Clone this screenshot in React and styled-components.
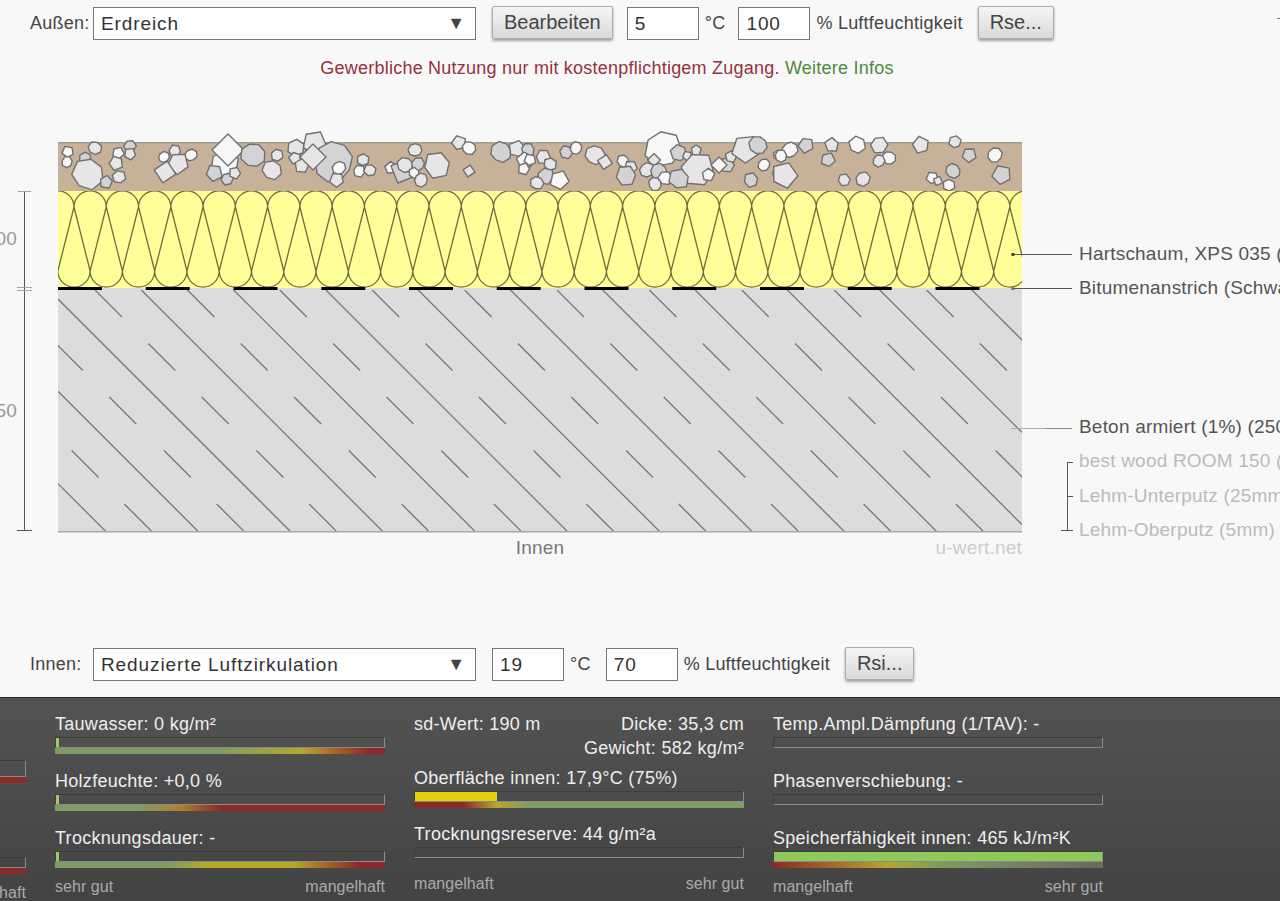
import React from 'react';
import styled, { createGlobalStyle } from 'styled-components';

const GlobalStyle = createGlobalStyle`
  html, body {
    margin: 0;
    height: 901px;
    overflow: hidden;
    background: #f8f8f8;
    font-family: "Liberation Sans", Arial, sans-serif;
  }
`;

// x, y, radius, shade (w white, l light, g grey), sides
const STONES = [
  [68, 152, 5, 'w', 5], [67, 162, 4.5, 'w', 7], [95, 148, 5.5, 'l', 7], [85, 158, 5, 'g', 6],
  [88, 174, 13, 'l', 7], [118, 153, 5, 'w', 5], [116, 163, 6, 'l', 5], [130, 146, 5, 'g', 6],
  [130, 154, 5, 'l', 5], [119, 177, 5.5, 'l', 6], [106, 182, 5.5, 'g', 5],
  [164, 157, 4.5, 'w', 8], [175, 151, 5, 'l', 6], [191, 155, 5, 'w', 8], [178, 163, 9, 'l', 5],
  [165, 172, 11, 'l', 4], [225, 165, 12, 'w', 6], [214, 173, 7, 'g', 5], [227, 179, 5, 'g', 6],
  [235, 173, 5, 'l', 5], [228, 150, 16, 'w', 4], [253, 155, 10, 'g', 8], [277, 155, 5, 'l', 6], [272, 170, 8, 'l', 7],
  [296, 148, 7, 'l', 6], [314, 143, 10, 'l', 5], [295, 158, 5, 'l', 5], [302, 166, 6, 'l', 5],
  [333, 162, 16, 'g', 9], [313, 157, 13, 'l', 4], [339, 168, 5.5, 'w', 8], [337, 180, 6, 'l', 5],
  [363, 160, 5, 'l', 6], [359, 171, 5, 'w', 6], [370, 170, 5, 'l', 6],
  [391, 168, 5, 'w', 5], [415, 150, 5.5, 'l', 8], [403, 171, 13, 'g', 4], [405, 165, 6.5, 'l', 7],
  [418, 164, 5.5, 'g', 7], [414, 173, 4.5, 'w', 6], [421, 180, 5.5, 'l', 8], [437, 165, 11, 'l', 6],
  [459, 143, 6, 'l', 5], [469, 148, 5.5, 'w', 8], [469, 171, 6, 'l', 4],
  [501, 152, 8.5, 'g', 8], [517, 149, 7, 'l', 5], [528, 150, 5.5, 'g', 7], [525, 160, 7, 'w', 5], [524, 169, 5, 'w', 5],
  [530, 160, 5, 'w', 5], [543, 157, 6, 'l', 6], [550, 164, 5.5, 'l', 6], [546, 176, 7, 'g', 6],
  [537, 183, 5.5, 'l', 7], [559, 180, 8, 'w', 5], [566, 152, 5.5, 'g', 6], [576, 148, 5, 'w', 8],
  [595, 155, 8, 'l', 8], [605, 162, 7.5, 'l', 4], [623, 161, 5, 'w', 7], [631, 167, 5.5, 'l', 5], [626, 176, 8.5, 'g', 6],
  [663, 149, 15, 'w', 7], [654, 160, 6.5, 'l', 4], [647, 170, 6, 'l', 8], [659, 172, 7, 'g', 8],
  [665, 178, 6, 'w', 6], [655, 184, 5.5, 'l', 8], [679, 153, 7, 'g', 6], [687, 156, 4, 'l', 5], [696, 150, 4.5, 'l', 5],
  [698, 169, 14, 'l', 6], [679, 179, 8.5, 'g', 6], [708, 175, 5.5, 'w', 5], [727, 165, 6, 'g', 6],
  [719, 165, 8, 'w', 4], [731, 157, 5, 'l', 5], [745, 149, 12, 'l', 5], [758, 145, 7.5, 'g', 8],
  [764, 165, 5, 'w', 8], [751, 180, 6, 'g', 6], [778, 155, 4, 'l', 6], [778, 173, 5, 'l', 6],
  [790, 150, 6.5, 'w', 8], [781, 156, 5, 'w', 7], [784, 175, 11, 'l', 5], [806, 145, 6.5, 'g', 5],
  [832, 145, 6, 'l', 5], [828, 160, 6, 'g', 5], [857, 145, 7, 'w', 6], [879, 145, 7, 'l', 6],
  [889, 158, 5.5, 'w', 8], [879, 161, 5, 'l', 7], [844, 180, 5, 'l', 6], [863, 179, 6, 'l', 7],
  [921, 145, 7, 'l', 5], [955, 142, 5, 'l', 6], [969, 155, 6, 'g', 5], [995, 155, 6, 'w', 8],
  [953, 171, 6, 'g', 8], [932, 178, 5, 'w', 5], [938, 181, 5, 'l', 4], [949, 185, 5, 'w', 6], [1002, 175, 8, 'g', 5],
];

const SHADES = { w: '#f7f7f7', l: '#e6e6e8', g: '#d3d3d5' };

const stonePoints = (x, y, r, sides, seed) => {
  const points = [];
  const start = sides === 4 ? 0.2 * (seed % 3) : seed * 1.7;
  for (let i = 0; i < sides; i++) {
    const a = start + (i / sides) * Math.PI * 2;
    const k = sides === 4 ? 1 : 1.08 + 0.2 * Math.abs(Math.sin(seed * 3.1 + i * 2.3));
    points.push(`${(x + Math.cos(a) * r * k).toFixed(1)},${(y + Math.sin(a) * r * k).toFixed(1)}`);
  }
  return points.join(' ');
};

const LEFT = 58;
const RIGHT = 1022;
const WAVE = 32.27;

const buildWave = () => {
  let d = '';
  for (let i = -1; i < 30; i++) {
    const t = 74 + WAVE * i;
    const b = t + WAVE / 2;
    d += `M${t} 207A${WAVE / 2} ${WAVE / 2} 0 0 1 ${t + WAVE} 207`;
    d += `M${b} 271A${WAVE / 2} ${WAVE / 2} 0 0 0 ${b + WAVE} 271`;
    d += `M${t} 207L${b} 271M${t + WAVE} 207L${b} 271`;
  }
  return d;
};

const buildHatch = () => {
  const lines = [];
  for (let k = 0; k < 13; k++) {
    const c = 425.6 - 92.3 * k;
    lines.push([LEFT, LEFT + c, RIGHT, RIGHT + c]);
  }
  const len = 27;
  const rows = [[290, 95], [343.5, 148.3], [397, 201.7], [450.5, 164], [504, 216.7]];
  rows.forEach(([y, start]) => {
    for (let k = -1; k < 10; k++) {
      const x = start + 92.4 * k;
      lines.push([x, y, x + len, y + len]);
    }
  });
  return lines;
};

const Wall = () => (
  <Drawing viewBox="0 90 1280 558">
    <defs>
      <clipPath id="wave-clip"><rect x={LEFT} y="191" width={RIGHT - LEFT} height="97" /></clipPath>
      <clipPath id="hatch-clip"><rect x={LEFT} y="290" width={RIGHT - LEFT} height="241" /></clipPath>
    </defs>

    <rect x={LEFT} y="142" width={RIGHT - LEFT} height="49" fill="#c7b299" />
    <rect x={LEFT} y="142" width={RIGHT - LEFT} height="1.5" fill="#a59c90" />
    {STONES.map(([x, y, r, shade, sides], i) => (
      <polygon
        key={i}
        points={stonePoints(x, y, r, sides, i + 1)}
        fill={SHADES[shade]}
        stroke="#707070"
        strokeWidth="1.4"
        strokeLinejoin="round"
      />
    ))}

    <rect x={LEFT} y="191" width={RIGHT - LEFT} height="97" fill="#ffff99" />
    <path d={buildWave()} fill="none" stroke="#6f6d3c" strokeWidth="1.3" clipPath="url(#wave-clip)" />

    <rect x={LEFT} y="288" width={RIGHT - LEFT} height="244" fill="#dcdcdc" />
    <g clipPath="url(#hatch-clip)" stroke="#777" strokeWidth="1.3">
      {buildHatch().map(([x1, y1, x2, y2], i) => (
        <line key={i} x1={x1} y1={y1} x2={x2} y2={y2} />
      ))}
    </g>
    <rect x={LEFT} y="531" width={RIGHT - LEFT} height="1.5" fill="#a9a9a9" />
    {Array.from({ length: 11 }, (_, i) => (
      <rect key={i} x={LEFT + 87.75 * i} y="287" width="44" height="3" fill="#000" />
    ))}

    <g stroke="#555" strokeWidth="1">
      <line x1="24.5" y1="191" x2="24.5" y2="531" />
      <line x1="17" y1="530.5" x2="32" y2="530.5" />
      <line x1="1013" y1="254.5" x2="1072" y2="254.5" />
      <line x1="1013" y1="288.5" x2="1072" y2="288.5" />
      <line x1="1045" y1="428.5" x2="1072" y2="428.5" stroke="#888" />
      <line x1="1011" y1="428.5" x2="1045" y2="428.5" stroke="#aaa" />
      <line x1="1067.5" y1="462" x2="1067.5" y2="531" />
      <line x1="1067" y1="462.5" x2="1073" y2="462.5" />
      <line x1="1067" y1="496.5" x2="1073" y2="496.5" />
      <line x1="1061" y1="530.5" x2="1073" y2="530.5" />
    </g>
    <g stroke="#a5a5a5" strokeWidth="1">
      <line x1="18" y1="191.5" x2="31" y2="191.5" />
      <line x1="17" y1="287.5" x2="32" y2="287.5" />
      <line x1="17" y1="290.5" x2="32" y2="290.5" />
    </g>
    <circle cx="1013" cy="254.5" r="1.8" fill="#444" />
    <circle cx="1013" cy="288.5" r="1.6" fill="#666" />

    <DimText x="17" y="245">100</DimText>
    <DimText x="17" y="417">250</DimText>
    <LayerText x="1079" y="260">Hartschaum, XPS 035 (100mm)</LayerText>
    <LayerText x="1079" y="294">Bitumenanstrich (Schwarzanstrich)</LayerText>
    <LayerText x="1079" y="433">Beton armiert (1%) (250mm)</LayerText>
    <LayerText x="1079" y="467" $muted>best wood ROOM 150 (60mm)</LayerText>
    <LayerText x="1079" y="502" $muted>Lehm-Unterputz (25mm)</LayerText>
    <LayerText x="1079" y="536" $muted>Lehm-Oberputz (5mm)</LayerText>
    <SideText x="540" y="554">Innen</SideText>
    <BrandText x="1022" y="554">u-wert.net</BrandText>
  </Drawing>
);

const Gauge = ({ gradient, fill, color, tall }) => (
  <GaugeBox>
    <Track $tall={tall}>
      {fill ? <Fill $color={color} style={{ width: fill }} /> : null}
    </Track>
    <Strip $gradient={gradient} />
  </GaugeBox>
);

const Item = ({ label, ...gauge }) => (
  <div>
    <Label>{label}</Label>
    <Gauge {...gauge} />
  </div>
);

const GREEN = '#7f9c62';
const YELLOW = '#b7a72b';
const RED = '#8c2a2a';

export default function App() {
  return (
    <Page>
      <GlobalStyle />
      <CornerMark />
      <ClimateRow>
        <RowLabel>Außen:</RowLabel>
        <SelectBox>Erdreich<Arrow>▼</Arrow></SelectBox>
        <PlainButton>Bearbeiten</PlainButton>
        <NumberBox>5</NumberBox>
        <Unit $gap={13}>°C</Unit>
        <NumberBox>100</NumberBox>
        <Unit $gap={15}>% Luftfeuchtigkeit</Unit>
        <PlainButton>Rse...</PlainButton>
      </ClimateRow>
      <Notice>
        Gewerbliche Nutzung nur mit kostenpflichtigem Zugang. <NoticeLink>Weitere Infos</NoticeLink>
      </Notice>
      <Wall />
      <ClimateRow>
        <RowLabel>Innen:</RowLabel>
        <SelectBox>Reduzierte Luftzirkulation<Arrow>▼</Arrow></SelectBox>
        <NumberBox>19</NumberBox>
        <Unit $gap={15}>°C</Unit>
        <NumberBox>70</NumberBox>
        <Unit $gap={15}>% Luftfeuchtigkeit</Unit>
        <PlainButton>Rsi...</PlainButton>
      </ClimateRow>

      <Results>
        <CutColumn>
          <CutGauges>
            <Gauge tall gradient={`linear-gradient(90deg, ${GREEN}, ${RED} 60%)`} />
            <Gauge gradient={`linear-gradient(90deg, ${GREEN}, ${RED} 60%)`} />
          </CutGauges>
          <Foot $top={9}><span>sehr gut</span><span>mangelhaft</span></Foot>
        </CutColumn>

        <Column>
          <Item
            label="Tauwasser: 0 kg/m²"
            fill="3px"
            color="#9ccb62"
            gradient={`linear-gradient(90deg, ${GREEN} 50%, ${YELLOW} 75%, #a8642c 85%, ${RED} 95%)`}
          />
          <Item
            label="Holzfeuchte: +0,0 %"
            fill="3px"
            color="#9ccb62"
            gradient={`linear-gradient(90deg, ${GREEN} 25%, #b0802e 38%, ${RED} 50%)`}
          />
          <Item
            label="Trocknungsdauer: -"
            fill="3px"
            color="#9ccb62"
            gradient={`linear-gradient(90deg, ${GREEN} 35%, ${YELLOW} 45%, ${YELLOW} 72%, ${RED} 92%)`}
          />
          <Foot $top={-7}><span>sehr gut</span><span>mangelhaft</span></Foot>
        </Column>

        <TightColumn>
          <SplitLine>
            <Label>sd-Wert: 190 m</Label>
            <Label>Dicke: 35,3 cm</Label>
          </SplitLine>
          <WeightLabel>Gewicht: 582 kg/m²</WeightLabel>
          <Item
            label="Oberfläche innen: 17,9°C (75%)"
            fill="25%"
            color="#e2cf0e"
            gradient={`linear-gradient(90deg, ${RED} 15%, ${YELLOW} 25%, ${GREEN} 35%)`}
          />
          <Item label="Trocknungsreserve: 44 g/m²a" />
          <Foot $top={-5}><span>mangelhaft</span><span>sehr gut</span></Foot>
        </TightColumn>

        <Column>
          <Item label="Temp.Ampl.Dämpfung (1/TAV): -" />
          <Item label="Phasenverschiebung: -" />
          <Item
            label="Speicherfähigkeit innen: 465 kJ/m²K"
            fill="100%"
            color="#8fc95a"
            gradient={`linear-gradient(90deg, ${RED}, ${YELLOW} 35%, ${GREEN} 50%, #6d6d5f 95%)`}
          />
          <Foot $top={-7}><span>mangelhaft</span><span>sehr gut</span></Foot>
        </Column>
      </Results>
    </Page>
  );
}

const Page = styled.div`
  position: relative;
  width: 1280px;
  height: 901px;
  overflow: hidden;
  padding-top: 7px;
  box-sizing: border-box;
  color: #444;
`;

const CornerMark = styled.div`
  position: absolute;
  top: 18px;
  right: 0;
  width: 3px;
  height: 1px;
  background: #777;
`;

const ClimateRow = styled.div`
  display: flex;
  align-items: center;
  height: 33px;
  padding-left: 30px;
  font-size: 18px;
  letter-spacing: 0.23px;
`;

const RowLabel = styled.span`
  width: 63px;
  flex: none;
`;

const SelectBox = styled.div`
  width: 383px;
  height: 33px;
  margin-right: 16px;
  padding: 0 10px 0 7px;
  box-sizing: border-box;
  display: flex;
  align-items: center;
  justify-content: space-between;
  border: 1px solid #777;
  background: #fff;
  color: #333;
  font-size: 19px;
  letter-spacing: 0.9px;
`;

const Arrow = styled.span`
  font-size: 18px;
  letter-spacing: 0;
  color: #444;
`;

const PlainButton = styled.button`
  height: 33px;
  margin: -2px 14px 0 0;
  padding: 0 11px;
  border: 1px solid #aaa;
  border-radius: 2px;
  background: linear-gradient(#f5f5f5, #d9d9d9);
  box-shadow: 0 2px 3px rgba(0, 0, 0, 0.35);
  color: #444;
  font: 20px "Liberation Sans", Arial, sans-serif;
`;

const NumberBox = styled.div`
  width: 72px;
  height: 33px;
  margin-right: 6px;
  padding: 0 7px;
  box-sizing: border-box;
  display: flex;
  align-items: center;
  border: 1px solid #777;
  background: #fff;
  color: #333;
  font-size: 19px;
  letter-spacing: 0.9px;
`;

const Unit = styled.span`
  margin-right: ${(p) => p.$gap}px;
`;

const Notice = styled.div`
  width: 1214px;
  height: 50px;
  text-align: center;
  font-size: 18px;
  line-height: 57px;
  letter-spacing: 0.23px;
  color: #97303f;
`;

const NoticeLink = styled.a`
  color: #4d8a3a;
`;

const Drawing = styled.svg`
  display: block;
  width: 1280px;
  height: 558px;
  font-family: "Liberation Sans", Arial, sans-serif;
  font-size: 19px;
  letter-spacing: 0.2px;
`;

const DimText = styled.text`
  fill: #999;
  text-anchor: end;
`;

const LayerText = styled.text`
  fill: ${(p) => (p.$muted ? '#bbb' : '#555')};
`;

const SideText = styled.text`
  fill: #777;
  text-anchor: middle;
`;

const BrandText = styled.text`
  fill: #ccc;
  text-anchor: end;
`;

const Results = styled.div`
  display: flex;
  gap: 29px;
  width: 1584px;
  height: 204px;
  margin: 16px 0 0 -304px;
  padding-top: 15px;
  box-sizing: border-box;
  border-top: 1px solid #2c2c2c;
  background: linear-gradient(#535353, #434343);
  color: #eee;
`;

const Column = styled.div`
  width: 330px;
  flex: none;
  display: flex;
  flex-direction: column;
  gap: 16px;
  font-size: 18px;
  letter-spacing: 0.28px;
`;

const TightColumn = styled(Column)`
  gap: 15px;
`;

const CutColumn = styled.div`
  width: 330px;
  flex: none;
  padding-top: 47px;
`;

const CutGauges = styled.div`
  display: flex;
  flex-direction: column;
  gap: 74px;
`;

const Label = styled.div`
  height: 24px;
  line-height: 22px;
  white-space: nowrap;
`;

const SplitLine = styled.div`
  display: flex;
  justify-content: space-between;
`;

const WeightLabel = styled(Label)`
  text-align: right;
  margin: -15px 0 -9px;
`;

const GaugeBox = styled.div`
  display: flex;
  flex-direction: column;
`;

const Track = styled.div`
  height: ${(p) => (p.$tall ? 17 : 11)}px;
  box-sizing: border-box;
  border-top: 1px solid #3c3c3c;
  border-left: 1px solid #3c3c3c;
  border-right: 1px solid #8c8c8c;
  border-bottom: 1px solid #8a8a8a;
`;

const Fill = styled.div`
  height: 9px;
  background: ${(p) => p.$color};
`;

const Strip = styled.div`
  height: 6px;
  background: ${(p) => p.$gradient || 'none'};
`;

const Foot = styled.div`
  display: flex;
  justify-content: space-between;
  margin-top: ${(p) => p.$top}px;
  height: 20px;
  line-height: 20px;
  font-size: 16px;
  letter-spacing: 0.05px;
  color: #aaa;
`;
